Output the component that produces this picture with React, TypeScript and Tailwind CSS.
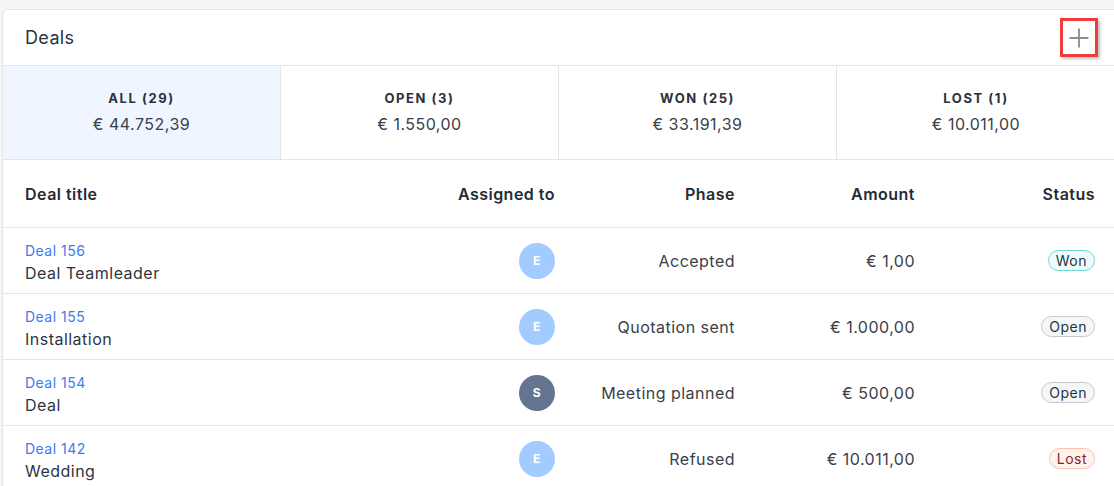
import { Plus } from "lucide-react";

const tabs = [
  { label: "ALL (29)", amount: "€ 44.752,39", active: true },
  { label: "OPEN (3)", amount: "€ 1.550,00" },
  { label: "WON (25)", amount: "€ 33.191,39" },
  { label: "LOST (1)", amount: "€ 10.011,00" },
];

type Status = "Won" | "Open" | "Lost";

const deals: {
  ref: string;
  title: string;
  user: string;
  dark?: boolean;
  phase: string;
  amount: string;
  status: Status;
}[] = [
  { ref: "Deal 156", title: "Deal Teamleader", user: "E", phase: "Accepted", amount: "€ 1,00", status: "Won" },
  { ref: "Deal 155", title: "Installation", user: "E", phase: "Quotation sent", amount: "€ 1.000,00", status: "Open" },
  { ref: "Deal 154", title: "Deal", user: "S", dark: true, phase: "Meeting planned", amount: "€ 500,00", status: "Open" },
  { ref: "Deal 142", title: "Wedding", user: "E", phase: "Refused", amount: "€ 10.011,00", status: "Lost" },
];

const badgeStyles: Record<Status, string> = {
  Won: "border-[#6dd8d2] bg-[#effbfa] text-[#1f3347]",
  Open: "border-[#c6c9d0] bg-[#f5f6f8] text-[#1f3347]",
  Lost: "border-[#fbc2ae] bg-[#fff1ec] text-[#8f1f1a]",
};

export default function App() {
  return (
    <div
      className="w-full h-[486px] overflow-hidden bg-[#f4f5f7] pl-[2px] pt-[9px] text-[#2f3540] tracking-[0.03em]"
      style={{ fontFamily: "Inter, 'Noto Sans', sans-serif" }}
    >
      <div className="w-[1114px] bg-white border border-[#e3e5e9] rounded-tl-md">
        {/* header */}
        <div className="h-[56px] flex items-center justify-between pl-[22px] pr-[17px] border-b border-[#e3e5e9]">
          <span className="text-[18px] text-[#2b3340] tracking-[0.02em]">Deals</span>
          <button className="w-[38px] h-[39px] flex items-center justify-center border-[3px] border-[#f03b3b] shadow-[2px_2px_3px_rgba(0,0,0,0.25)]">
            <Plus size={30} strokeWidth={1.5} color="#8a8e96" />
          </button>
        </div>

        {/* tabs */}
        <div className="grid grid-cols-4 border-b border-[#e3e5e9]">
          {tabs.map((t, i) => (
            <div
              key={t.label}
              className={
                "h-[93px] flex flex-col items-center justify-center gap-[4px] " +
                (i < 3 ? "border-r border-[#e3e5e9] " : "") +
                (t.active ? "bg-[#eff6ff]" : "bg-white")
              }
            >
              <span className="text-[13px] font-bold tracking-[0.12em] text-[#2a313c]">{t.label}</span>
              <span className="text-[16px] text-[#3a404a]">{t.amount}</span>
            </div>
          ))}
        </div>

        {/* table header */}
        <div className="grid grid-cols-[1fr_180px_180px_180px_180px] h-[68px] items-center pl-[22px] pr-[20px] border-b border-[#e3e5e9] text-[16px] font-semibold text-[#232b36]">
          <span>Deal title</span>
          <span className="text-right">Assigned to</span>
          <span className="text-right">Phase</span>
          <span className="text-right">Amount</span>
          <span className="text-right">Status</span>
        </div>

        {deals.map((d) => (
          <div
            key={d.ref}
            className="grid grid-cols-[1fr_180px_180px_180px_180px] h-[66px] items-center pl-[22px] pr-[20px] border-b border-[#e3e5e9]"
          >
            <div className="flex flex-col pt-[4px]">
              <span className="text-[14px] leading-[20px] text-[#3b7cf0]">{d.ref}</span>
              <span className="text-[16px] leading-[24px] text-[#2f3540]">{d.title}</span>
            </div>
            <div className="flex justify-end">
              <span
                className={
                  "w-[36px] h-[36px] rounded-full flex items-center justify-center text-[12px] font-bold text-white " +
                  (d.dark ? "bg-[#637590]" : "bg-[#a2cbff]")
                }
              >
                {d.user}
              </span>
            </div>
            <span className="text-right text-[16px] text-[#3a404a]">{d.phase}</span>
            <span className="text-right text-[16px] text-[#3a404a]">{d.amount}</span>
            <div className="flex justify-end">
              <span
                className={
                  "px-[7px] h-[21px] flex items-center rounded-full border text-[14px] " + badgeStyles[d.status]
                }
              >
                {d.status}
              </span>
            </div>
          </div>
        ))}
      </div>
    </div>
  );
}
